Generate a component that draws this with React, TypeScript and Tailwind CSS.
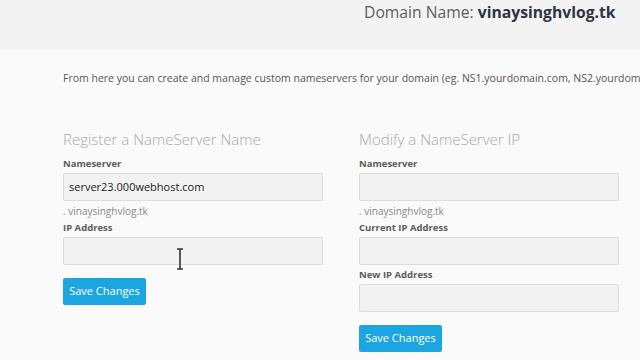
import React from 'react';

const font = { fontFamily: '"Open Sans", "Liberation Sans", sans-serif' };

function Label({ children }: { children: React.ReactNode }) {
  return <div className="mb-[3px] h-[12px] text-[9.5px] leading-[12px] font-bold text-[#5a5a5a]">{children}</div>;
}

function Field({ value, cursor }: { value?: string; cursor?: boolean }) {
  return (
    <div className="relative flex h-[28px] w-[260px] items-center rounded-[2px] border border-[#dcdcdc] bg-[#f2f2f2] px-[5px] text-[11px] text-[#222]">
      {value}
      {cursor && (
        <svg className="absolute left-[112px] top-[10px]" width="8" height="22" viewBox="0 0 8 22">
          <path d="M1 1h6M4 1v20M1 21h6" stroke="#333" strokeWidth="1.6" fill="none" />
        </svg>
      )}
    </div>
  );
}

function Hint() {
  return <div className="mt-[3px] h-[14px] text-[10px] leading-[14px] text-[#888]">. vinaysinghvlog.tk</div>;
}

function SaveButton() {
  return (
    <button className="mt-[13px] flex h-[27px] w-[83px] items-center justify-center rounded-[2px] bg-[#1ba6e2] text-[11px] text-white">
      Save Changes
    </button>
  );
}

export default function App() {
  return (
    <div className="h-[360px] w-[640px] overflow-hidden bg-[#fafafa]" style={font}>
      <div className="flex h-[50px] bg-[#f3f3f3] pl-[364px] pt-[2px]">
        <div className="whitespace-nowrap text-[15.7px] leading-[21px] text-[#5c5c5c]">
          Domain Name: <span className="font-bold text-[#2d3445]">vinaysinghvlog.tk</span>
        </div>
      </div>

      <div className="pl-[63px]">
        <p className="mt-[20px] h-[16px] whitespace-nowrap text-[10.5px] leading-[16px] text-[#555]">
          From here you can create and manage custom nameservers for your domain (eg. NS1.yourdomain.com, NS2.yourdomain.com...)
        </p>

        <div className="mt-[43px] flex gap-[36px]">
          <div className="w-[260px]">
            <h3 className="mb-[9px] h-[20px] text-[15px] leading-[20px] font-light text-[#a8a8a8]">Register a NameServer Name</h3>
            <Label>Nameserver</Label>
            <Field value="server23.000webhost.com" />
            <Hint />
            <div className="mt-[4px]">
              <Label>IP Address</Label>
            </div>
            <Field cursor />
            <SaveButton />
          </div>

          <div className="w-[260px]">
            <h3 className="mb-[9px] h-[20px] text-[15px] leading-[20px] font-light text-[#a8a8a8]">Modify a NameServer IP</h3>
            <Label>Nameserver</Label>
            <Field />
            <Hint />
            <div className="mt-[4px]">
              <Label>Current IP Address</Label>
            </div>
            <Field />
            <div className="mt-[4px]">
              <Label>New IP Address</Label>
            </div>
            <Field />
            <SaveButton />
          </div>
        </div>
      </div>
    </div>
  );
}
